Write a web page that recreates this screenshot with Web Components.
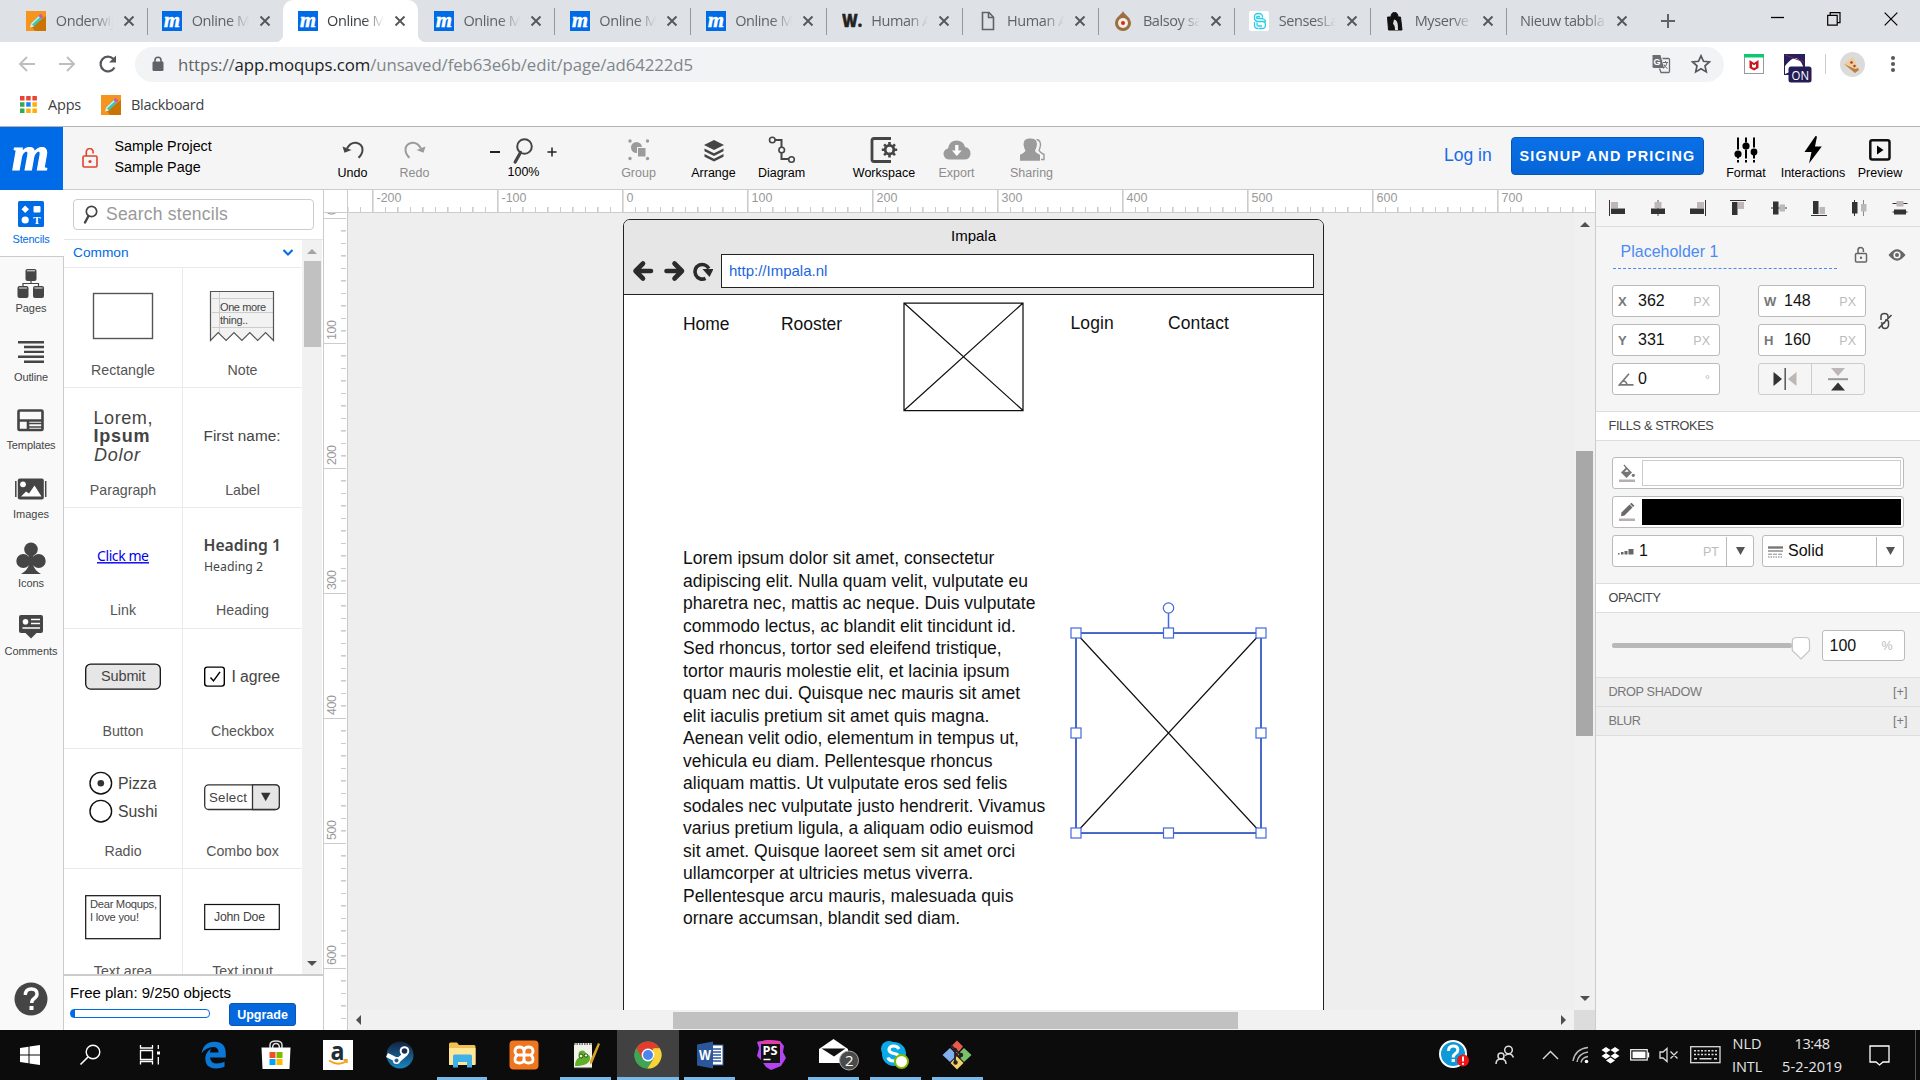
<!DOCTYPE html>
<html lang="en">
<head>
<meta charset="utf-8">
<title>Moqups editor</title>
<style>
html,body{margin:0;padding:0;width:1920px;height:1080px;overflow:hidden;background:#fff}
body{font-family:"Liberation Sans",Arial,sans-serif;color:#000}
</style>
</head>
<body>
<desktop-screen></desktop-screen>
<script>
const UI = '"Open Sans","Noto Sans",sans-serif';
const D = '#454545', G = '#9b9b9b', B = '#006be6';

function define(name, css, render) {
  customElements.define(name, class extends HTMLElement {
    connectedCallback() {
      if (this.shadowRoot) return;
      this.attachShadow({ mode: 'open' }).innerHTML =
        `<style>*{box-sizing:border-box}svg{display:block;flex:none}:host{box-sizing:border-box;display:block;flex:none}${css}</style>` +
        (typeof render === 'function' ? render(this) : render);
    }
  });
}
const A = (el, n, d = '') => el.getAttribute(n) ?? d;

/* name: [width, height, markup] */
const ICONS = {
  blackboard: [20, 20, `<rect width="20" height="20" fill="#f7941d"/><path d="M6 16 20 5V20H9z" fill="#c97403"/><path d="M4 16.500l1-4L13 4.500l3 3-8 8z" fill="#3cc6b4"/><path d="M5.500 13 13.500 5.500" stroke="#d7f3ef" stroke-width="1.300"/><path d="M12.500 5 14.500 2.700l3 3-2 2z" fill="#c95bb8"/><path d="M4 16.500l1-4 3 3z" fill="#f8e6c8"/>`],
  moq: [20, 20, `<rect width="20" height="20" fill="${B}"/><text x="2" y="15.500" font-family="Liberation Serif" font-style="italic" font-weight="bold" font-size="20" textLength="16" lengthAdjust="spacingAndGlyphs" fill="#fff" stroke="#fff" stroke-width=".5">m</text>`],
  wdot: [22, 20, `<text x="0" y="16" font-family="Open Sans" font-weight="800" font-size="17" textLength="20" lengthAdjust="spacingAndGlyphs" fill="#222" stroke="#222" stroke-width=".5">W.</text>`],
  doc: [20, 20, `<path d="M4.500 1.500h6.500l4.500 4.700v12.300h-11zM10.500 1.500v5h5" fill="none" stroke="#5f6368" stroke-width="1.600"/>`],
  drop: [20, 20, `<path d="M10 0C11 3.500 18 6 18 12.500a8 7.500 0 0 1-16 0C2 6 9 3.500 10 0z" fill="#9a7040"/><circle cx="10" cy="12" r="5" fill="#f6eee4"/><circle cx="10" cy="12" r="2" fill="#e0261c"/>`],
  senses: [20, 20, `<rect width="20" height="20" rx="2" fill="#fff"/><g fill="none" stroke="#29cfe6" stroke-width="1.300"><path d="M13.500 6.500V5.500q0-3-4-3t-4 3v2q0 2.500 3 3h5q3 0 3 3.500t-3.500 3.500h-3"/><path d="M11 5.500H9q-1.500 0-1.500 1t1.500 1h4.500q3 1 3 3.500M5.500 11v3.500q0 3 4 3M8 11.500v2.500q0 1 1.500 1H13"/></g>`],
  myserve: [20, 20, `<path d="M2.500 6h13l1.500 13H3.500zM6 6q0-4.500 3.500-4.500T13 6" fill="#111" stroke="#111"/><path d="M9 8.500q4.500 0 4 10.500h-3q0-5-2-6z" fill="#ddd"/>`],
  close: [12, 12, `<path d="M1.500 1.500l9 9M10.500 1.500l-9 9" stroke="#54585d" stroke-width="1.900"/>`],
  plus: [16, 16, `<path d="M8 1v14M1 8h14" stroke="#5f6368" stroke-width="2"/>`],
  min: [14, 14, `<path d="M0 5.500h13" stroke="#000" stroke-width="1.300"/>`],
  restore: [14, 14, `<path d="M.700 3.300h9.500v9.800H.700zM3.200 3V.700H13v10h-2.500" fill="none" stroke="#000" stroke-width="1.200"/>`],
  xwin: [14, 14, `<path d="M.700.700l12.600 12.600M13.300.700.700 13.300" stroke="#000" stroke-width="1.200"/>`],
  back: [18, 18, `<path d="M17 9H2M9 2 2 9l7 7" fill="none" stroke="#bcbec1" stroke-width="1.900"/>`],
  fwd: [18, 18, `<path d="M1 9h15M9 2l7 7-7 7" fill="none" stroke="#bcbec1" stroke-width="1.900"/>`],
  reload: [20, 20, `<path d="M16.500 13.500A7.400 7.400 0 1 1 15.300 4.800" fill="none" stroke="#54585d" stroke-width="2.200"/><path d="M18 1.500v7h-7z" fill="#54585d"/>`],
  plock: [12, 16, `<rect x=".5" y="5.500" width="11" height="9.500" rx="1.200" fill="#5f6368"/><path d="M3 6V4.200a3 3 0 0 1 6 0V6" fill="none" stroke="#5f6368" stroke-width="1.600"/>`],
  translate: [20, 20, `<path d="M1.500 1h8l3.500 13H3q-1.500 0-1.500-1.500z" fill="#6a6e73"/><path d="M11.500 4.500h6q1 0 1 1v12q0 1-1 1H10l-1.500-4" fill="none" stroke="#6a6e73" stroke-width="1.300"/><text x="2.500" y="11" font-size="9" font-weight="bold" fill="#fff" font-family="Liberation Sans">G</text><path d="M12 8.500h5M14.500 7v1.500M16 8.500q-.5 4-4 6M13 10.500q1 3 3.500 4" stroke="#6a6e73" fill="none"/>`],
  star: [20, 20, `<path d="M10 1.800l2.500 5.500 6 .6-4.500 4 1.300 6-5.300-3.100-5.300 3.100L6 11.900l-4.500-4 6-.6z" fill="none" stroke="#54585d" stroke-width="1.700"/>`],
  mcafee: [20, 20, `<rect x=".5" y=".5" width="19" height="19" fill="#fff" stroke="#999"/><rect width="20" height="3.500" fill="#0bc973"/><path d="M5.500 6v8l4.500 2.500 4.500-2.500V6L10 9z" fill="#c8181e"/><path d="M8 10l2 1.300 2-1.300v3l-2 1-2-1z" fill="#fff"/>`],
  onext: [28, 30, `<rect width="21" height="21" fill="#2a1f5c"/><path d="M1 20V12Q8 3 12 4t7 8v6H6z" fill="#fff"/><path d="M1 1 20 8" stroke="#6d2d63"/><rect x="4.500" y="12.500" width="23" height="16" rx="2.500" fill="#231c56"/><text x="7.500" y="25.500" font-size="12.500" fill="#fff" font-family="Open Sans" textLength="17.500" lengthAdjust="spacingAndGlyphs">ON</text>`],
  avatar: [25, 25, `<circle cx="12.500" cy="12.500" r="12.500" fill="#dcdbd9"/><path d="M4 12 13 5l6 13-4 2z" fill="#ecd09c"/><path d="M4 12l11 9 4-3-1-2-3 1z" fill="#b98043"/><circle cx="11.500" cy="10.500" r="1.300" fill="#a33"/><circle cx="14.500" cy="14" r="1.200" fill="#a33"/>`],
  dots: [6, 18, `<g fill="#54585d"><circle cx="3" cy="3" r="2"/><circle cx="3" cy="9" r="2"/><circle cx="3" cy="15" r="2"/></g>`],
  apps: [17, 17, `<g><path d="M0 0h4.500v4.500H0zM6.200 0h4.500v4.500H6.200zM12.400 0h4.500v4.500h-4.500z" fill="#ea4335"/><path d="M0 6.200h4.500v4.500H0zM0 12.400h4.500v4.500H0z" fill="#34a853"/><path d="M6.200 6.200h4.500v4.500H6.200z" fill="#1a84ee"/><path d="M12.400 6.200h4.500v4.500h-4.500zM6.200 12.400h4.500v4.500H6.200zM12.400 12.400h4.500v4.500h-4.500z" fill="#fbb005"/></g>`],

  biglogo: [63, 63, `<text x="12" y="43" font-family="Liberation Serif" font-style="italic" font-weight="bold" font-size="49" textLength="37" lengthAdjust="spacingAndGlyphs" fill="#fff" stroke="#fff" stroke-width="1.200">m</text>`],
  redlock: [16, 20, `<rect x="1" y="8" width="14" height="11" rx="1.200" fill="none" stroke="#e0442f" stroke-width="1.600"/><path d="M4.300 8V4.200a3.400 3.400 0 0 1 6.800-.500V5.500" fill="none" stroke="#e0442f" stroke-width="1.600"/><circle cx="8" cy="13.500" r="1.600" fill="#e0442f"/>`],
  undo: [22, 18, `<path d="M5 7.500Q8.500 1.200 14 1.800q6.500 1.200 6.500 7 0 4.500-4 8" fill="none" stroke="${D}" stroke-width="2"/><path d="M.500 5.500 2.500 11.800 9.500 9z" fill="${D}"/>`],
  redo: [22, 18, `<g transform="matrix(-1 0 0 1 22 0)"><path d="M5 7.500Q8.500 1.200 14 1.800q6.500 1.200 6.500 7 0 4.500-4 8" fill="none" stroke="${G}" stroke-width="2"/><path d="M.500 5.500 2.500 11.800 9.500 9z" fill="${G}"/></g>`],
  mag: [20, 26, `<circle cx="11.500" cy="8.500" r="7.300" fill="none" stroke="${D}" stroke-width="2"/><path d="M7.500 14.500 2.200 24" stroke="${D}" stroke-width="3.200" stroke-linecap="round"/>`],
  smag: [15, 19, `<circle cx="8.500" cy="6.500" r="5.200" fill="none" stroke="${D}" stroke-width="1.700"/><path d="M5.500 11 2 17.500" stroke="${D}" stroke-width="2.400" stroke-linecap="round"/>`],
  group: [22, 22, `<g fill="${G}"><circle cx="2" cy="2" r="1.700"/><circle cx="19.500" cy="2" r="1.700"/><circle cx="2" cy="19.500" r="1.700"/><circle cx="19.500" cy="19.500" r="1.700"/><circle cx="8.500" cy="8.500" r="5.500"/></g><rect x="9.500" y="8.500" width="8.500" height="9.500" fill="${G}" stroke="#f5f5f5"/>`],
  arrange: [22, 23, `<path d="M11 1 21 6 11 11 1 6z" fill="${D}"/><path d="M1.500 9.500 11 14.300l9.500-4.800v2.800L11 17l-9.500-4.700zM1.500 15 11 19.800 20.500 15v2.800L11 22.500l-9.500-4.700z" fill="${D}"/>`],
  diagram: [28, 28, `<path d="M7 4h6.500v7M13.500 17v6H20" fill="none" stroke="${D}" stroke-width="2"/><g fill="#f5f5f5" stroke="${D}" stroke-width="1.600"><circle cx="4.300" cy="4" r="2.800"/><circle cx="13.700" cy="14" r="2.800"/><circle cx="23.500" cy="23.500" r="2.800"/></g>`],
  workspace: [28, 26, `<path d="M21 1.500H4Q2 1.500 2 3.500v19q0 2 2 2h17" fill="none" stroke="${D}" stroke-width="2.800"/><circle cx="19.500" cy="12.700" r="4.300" fill="none" stroke="${D}" stroke-width="2.800"/><g stroke="${D}" stroke-width="2.600"><path d="M19.500 5v3M19.500 17.500v3M11.800 12.700h3M24.200 12.700h3M14.100 7.300l2 2M23 16.200l2 2M25 7.300l-2 2M16.100 16.200l-2 2"/></g>`],
  export: [28, 20, `<path d="M7 19.500Q1 19.500 .5 14 .5 9.500 5 8.500 6.500.500 13.500.500q7 0 8.500 6.500 5.500 1 5.500 6.500 0 6-6.500 6z" fill="${G}"/><path d="M12.200 5h3.200v5.500h3.300L13.800 16 9 10.500h3.200z" fill="#fff"/>`],
  sharing: [26, 24, `<path d="M17.500 1.500q4 .5 4 5.500-.5 3.500-1.500 5.500 1 2 5 4v5h-3" fill="none" stroke="${G}" stroke-width="1.400"/><path d="M12.500.500q5.500 0 5.500 6-.5 4-2 6 .5 2.500 5 4.200v6H1v-6q4.500-1.700 5.500-4.200Q5 10.500 4.500 6.500q0-6 5.500-6z" fill="${G}"/>`],
  format: [24, 26, `<g stroke="#000" stroke-width="2"><path d="M4 .5v12M12 .5v5M20 .5v10M4 19v2.500M12 12.500v9M20 17v4.500M4 23v2.500M12 23v2.500M20 23v2.500"/></g><circle cx="4" cy="17" r="3.600"/><circle cx="12" cy="9" r="3.600"/><circle cx="20" cy="15" r="3.400"/>`],
  bolt: [18, 28, `<path d="M11.500 0 .5 16h7L5 27.500 17.800 10.500H11L13 .5z" fill="#000"/>`],
  preview: [22, 22, `<rect x="1.300" y="1.300" width="19.200" height="19.200" rx="2" fill="none" stroke="#111" stroke-width="2.500"/><path d="M8 6.500 14.500 11 8 15.500z"/>`],

  stencils: [26, 26, `<rect width="26" height="26" rx="1.500" fill="${B}"/><path d="M7.200 4.500 11 8.300 7.200 12 3.500 8.300z" fill="#fff"/><rect x="15.500" y="5" width="7" height="6.500" rx="1" fill="#fff"/><circle cx="7.200" cy="19" r="3.600" fill="#fff"/><text x="15.300" y="22.700" font-size="11" font-weight="bold" fill="#fff" font-family="Liberation Serif">T</text>`],
  pages: [28, 30, `<g fill="${D}"><rect x="8.500" y="1" width="11" height="12" rx="2"/><rect x="0.500" y="18" width="11" height="12" rx="2"/><rect x="16" y="18" width="11" height="12" rx="2"/></g><path d="M14 13v2.500M6 18v-2.500h15.500V18" fill="none" stroke="${D}" stroke-width="1.200"/><path d="M10 2.800h8M2 20h8M17.500 20h8" stroke="#eee" stroke-width="1"/>`],
  outline: [26, 22, `<g fill="${D}"><path d="M0 0h26v2.400H0zM6 4.800h20v2.400H6zM6 9.700h20v2.400H6zM0 14.600h26V17H0zM6 19.500h20v2.500H6z"/></g>`],
  templates: [28, 23, `<rect x="1.500" y="1.500" width="24" height="19.500" rx="1" fill="none" stroke="${D}" stroke-width="2.600"/><path d="M1 11.500h25M11 12v9" stroke="${D}" stroke-width="2.600"/><path d="M12 14.500h13M12 18h13" stroke="${D}" stroke-width="1.500"/>`],
  images: [32, 22, `<rect x="2.800" y=".5" width="26" height="21" rx="2" fill="${D}"/><path d="M.800 3v16M30.700 3v16" stroke="${D}" stroke-width="1.500"/><circle cx="8" cy="6.300" r="2.900" fill="#fff"/><path d="M6 18.500 11 13.500l3 2L19.500 7.500 26.500 18.500z" fill="#fff"/>`],
  club: [30, 32, `<g fill="${D}"><circle cx="15" cy="7.300" r="6.800"/><circle cx="7.300" cy="19" r="7"/><circle cx="22.700" cy="19" r="7"/><path d="M12.500 12h5l-.5 10q1 6 8 10H5q7-4 8-10z"/></g>`],
  comments: [26, 25, `<path d="M3 1h20q2 0 2 2v14q0 2-2 2h-4.500L13 24.500 7.500 19H3q-2 0-2-2V3q0-2 2-2z" fill="${D}"/><circle cx="7.500" cy="7.700" r="2.800" fill="#fff"/><path d="M13 5.500h9M13 9.500h9M4.500 14h17.500" stroke="#fff" stroke-width="1.500"/>`],
  help: [34, 34, `<circle cx="17" cy="17" r="16.500" fill="${D}"/><path d="M11.300 13q0-6 6-6 5.700 0 5.700 5 0 2.500-2.800 4.500-2.500 1.700-2.500 4.500" fill="none" stroke="#fff" stroke-width="3.400"/><rect x="15.500" y="24" width="4" height="4" fill="#fff"/>`],
  chevd: [12, 7, `<path d="M1.500 1 6 5.500 10.500 1" fill="none" stroke="${B}" stroke-width="2"/>`],

  al0: [18, 18, `<path d="M.5 1v16" stroke="#333"/><rect x="2" y="3" width="7" height="6" fill="#bdb7b5"/><rect x="2" y="9.500" width="14" height="5.500" fill="#333"/>`],
  al1: [18, 18, `<path d="M9 1v16" stroke="#555"/><rect x="5.500" y="3" width="7" height="6" fill="#bdb7b5"/><rect x="2" y="9.500" width="14" height="5.500" fill="#333"/>`],
  al2: [18, 18, `<path d="M16.500 1v16" stroke="#333"/><rect x="8" y="3" width="7" height="6" fill="#bdb7b5"/><rect x="1" y="9.500" width="14" height="5.500" fill="#333"/>`],
  al3: [18, 18, `<path d="M1 1.500h16" stroke="#333"/><rect x="3" y="3" width="5.500" height="13" fill="#333"/><rect x="9" y="3" width="6" height="7" fill="#bdb7b5"/>`],
  al4: [18, 18, `<path d="M1 9h16" stroke="#333"/><rect x="3" y="2.500" width="5.500" height="13" fill="#333"/><rect x="9.500" y="5.500" width="5.500" height="7" fill="#bdb7b5"/>`],
  al5: [18, 18, `<path d="M1 16.500h16" stroke="#333"/><rect x="3" y="2" width="5.500" height="13" fill="#333"/><rect x="9.500" y="8" width="5.500" height="7" fill="#bdb7b5"/>`],
  al6: [18, 18, `<path d="M4.500 1v16" stroke="#333"/><path d="M13.500 1v16" stroke="#888"/><rect x="2" y="3" width="5.500" height="11.500" fill="#333"/><rect x="11" y="5" width="5.500" height="7.500" fill="#bdb7b5"/>`],
  al7: [18, 18, `<path d="M1.500 4.500h15M1.500 13h15" stroke="#333"/><rect x="5.500" y="2" width="7" height="5.500" fill="#bdb7b5"/><rect x="3" y="10.500" width="12" height="5" fill="#333"/>`],
  glock: [14, 18, `<rect x="1.500" y="7.500" width="11" height="8.500" rx="1" fill="none" stroke="#666" stroke-width="1.500"/><path d="M4 7V4.500a2.700 2.700 0 0 1 5.400-.500v2" fill="none" stroke="#666" stroke-width="1.500"/><circle cx="7" cy="11.700" r="1.200" fill="#666"/>`],
  eye: [18, 12, `<path d="M.500 6Q5 .3 9 .3T17.500 6Q13 11.700 9 11.700T.500 6z" fill="#666"/><circle cx="9" cy="6" r="3.600" fill="#f5f5f5"/><circle cx="9" cy="6" r="2" fill="#666"/>`],
  link: [16, 18, `<path d="M4 8V4.500q0-3 3.500-3t3.500 3V6M5 12v1.500q0 3 3 3t3.500-3V9.500Q11 8 8 8M4 10.500Q6 12 8 10.500" fill="none" stroke="${D}" stroke-width="1.500"/><path d="M14.500 3 1.500 16.500" stroke="${D}" stroke-width="1.500"/>`],
  angle: [16, 13, `<path d="M11 .8 1.500 11.800H15.500M5 8q3.500 0 4 4" fill="none" stroke="#777" stroke-width="1.700"/>`],
  fliph: [24, 22, `<path d="M.500 4 9 11 .5 18z" fill="#333"/><path d="M12.200 0v22" stroke="#555" stroke-width="1.500"/><path d="M23.500 4 15 11l8.500 7z" fill="#bdb7b5"/>`],
  flipv: [22, 24, `<path d="M4 1h14l-7 8z" fill="#bdb7b5"/><path d="M1 12.200h20" stroke="#999" stroke-width="2"/><path d="M4 23.500h14L11 15.500z" fill="#333"/>`],
  bucket: [17, 20, `<path d="M2 9.500 7.500 4l5.500 5.500L7.500 15z" fill="#777"/><path d="M5 2l3 3.500L4 9.300h7L8 5.500" fill="#fff" stroke="#777" stroke-width="1.200"/><circle cx="14.300" cy="12.300" r="1.600" fill="#777"/><rect x="0" y="16.500" width="16" height="2.500" fill="#b5b0ae"/>`],
  pencil: [17, 20, `<path d="M2.500 10.500 10.500 2.500l3 3-8 8-3.500.7z" fill="#6a6a6a"/><path d="M11 2 12.500.7l3 3L14 5z" fill="#6a6a6a"/><rect x="0" y="16.500" width="16" height="2.500" fill="#b5b0ae"/>`],
  weight: [16, 8, `<g fill="#666"><rect x="0" y="5" width="1.500" height="1.500"/><rect x="3" y="4" width="2.500" height="2.500"/><rect x="6.500" y="3" width="3" height="3.500"/><rect x="10.500" y="1" width="5" height="5.500"/></g>`],
  solid: [15, 12, `<path d="M0 1.500h15" stroke="#777" stroke-width="2.400"/><path d="M0 5h15" stroke="#aaa" stroke-width="2"/><path d="M0 8.200h15" stroke="#888" stroke-dasharray="4 1"/><path d="M0 11h15" stroke="#777" stroke-dasharray="1.500 1"/>`],
  thumb: [20, 25, `<path d="M5 1.500h9.500q4 0 4 4v9L10 23 1.300 14.500v-9q0-4 4-4z" fill="#fff" stroke="#c4c4c4" stroke-width="1.200"/>`],

  win: [20, 20, `<path d="M0 3 8.500 1.700V9.500H0zM9.500 1.500 20 0v9.500H9.500zM0 10.500h8.500v7.700L0 17zM9.500 10.500H20V20L9.500 18.400z" fill="#fff"/>`],
  tsearch: [22, 22, `<circle cx="14" cy="8" r="6.800" fill="none" stroke="#fff" stroke-width="1.400"/><path d="M9 13 1.500 20.500" stroke="#fff" stroke-width="1.600"/>`],
  tview: [22, 22, `<path d="M1.500 1v3h12V1M1.500 20.500v-3h12v3M1.500 6.500h12v9h-12zM19.300 1v4M19.300 13v7.500" fill="none" stroke="#fff" stroke-width="1.300"/><rect x="18" y="7.500" width="3" height="3" fill="#fff"/>`],
  edge: [26, 28, `<path d="M.5 12.500Q2.500.700 13.500.700 24.800.700 24.800 13v3.500H9q.5 6 7 6 4.500 0 7.500-1.800v5Q20 27.500 15 27.500 4 27 4.300 17q.3-6.500 6-9.300Q9 9.500 9 11.500h8.500q0-5.500-5-5.500Q5 6 .5 12.500z" fill="#0b78d7"/>`],
  store: [30, 30, `<path d="M9 8.500V5q0-4 6-4t6 4v3.500M11.500 8.500q0-5 3.500-5t3.500 5" fill="none" stroke="#ddd" stroke-width="1.500"/><path d="M.5 7.500h29L28.500 29h-27z" fill="#fff"/><path d="M8.500 12h6v6h-6z" fill="#f25022"/><path d="M15.500 12h6v6h-6z" fill="#7fba00"/><path d="M8.500 19h6v6h-6z" fill="#00a4ef"/><path d="M15.500 19h6v6h-6z" fill="#ffb900"/>`],
  amazon: [30, 30, `<rect width="30" height="30" fill="#fff"/><text x="7.500" y="20" font-family="Open Sans" font-size="25" font-weight="bold" textLength="14" lengthAdjust="spacingAndGlyphs" fill="#222d3a">a</text><path d="M6 20.500q9 6 17 1M20.500 20h3.300v3" fill="none" stroke="#f7a11a" stroke-width="1.800"/>`],
  steam: [28, 28, `<defs><linearGradient id="s" x2="0" y2="1"><stop offset="0" stop-color="#14213f"/><stop offset="1" stop-color="#1a86c0"/></linearGradient></defs><circle cx="14" cy="14" r="13.500" fill="url(#s)"/><path d="M1 14l11 5.500 8-7" stroke="#fff" stroke-width="4.500" fill="none"/><circle cx="18.500" cy="10" r="4.800" fill="#fff"/><circle cx="18.500" cy="10" r="2.800" fill="#1a2f55"/><circle cx="10.500" cy="19.500" r="3.600" fill="#fff"/><circle cx="10.500" cy="19.500" r="2" fill="#2a5f90"/>`],
  explorer: [28, 26, `<path d="M1 2q0-1.500 1.500-1.500H9L11 3h15q1.500 0 1.500 1.500V22H1z" fill="#f2c04e"/><path d="M1 6h26.500v17H1z" fill="#ffe79a"/><path d="M5 25.500V14q0-1.500 1.500-1.500h16Q24 12.500 24 14v11.500h-5V20h-9v5.500z" fill="#3fb1e8"/>`],
  xampp: [30, 30, `<rect x=".5" y=".5" width="29" height="29" rx="4" fill="#f0751f"/><path d="M15 11q-.5-4-4.500-4T6 10.500t3 4.500q-3 1-3 4.500t4.500 3.500 4.500-4V11q.5-4 4.500-4t4.500 3.500-3 4.500q3 1 3 4.500t-4.500 3.500-4.500-4M10 15h10" fill="none" stroke="#fff" stroke-width="2.800"/>`],
  npp: [28, 28, `<path d="M2 2h18v25H2z" fill="#f2f2e8"/><path d="M2 3h18" stroke="#777" stroke-width="2" stroke-dasharray="1.500 1"/><path d="M3 25q0-7 5-9-3-3 0-6 5-2 6 3 5 1 4 5-1 7-15 7z" fill="#5fae2a"/><circle cx="9" cy="15" r="2" fill="#e8f5d8" stroke="#264d10"/><circle cx="14" cy="14.500" r="1.700" fill="#e8f5d8" stroke="#264d10"/><path d="M18 20 26 2l2 1-7.500 18.500-2.500 2z" fill="#d8a52a"/><path d="M2 27h18" stroke="#333"/>`],
  chrome: [28, 28, `<circle cx="14" cy="14" r="13.500" fill="#4caf50"/><path d="M2.300 7.250A13.500 13.500 0 0 1 25.700 7.250H14z" fill="#e33b2e"/><path d="M25.700 7.250A13.500 13.500 0 0 1 13.500 27.500L20 17 18.500 7.250z" fill="#fdd13a"/><path d="M2.300 7.250 8.500 18 14 20l-.5 7.500A13.500 13.500 0 0 1 2.300 7.250z" fill="#3fa552"/><path d="M13 27.500 19.500 17.500 14 20z" fill="#3fa552"/><path d="M2.300 7.250H20L8.500 18z" fill="#e33b2e"/><path d="M2.300 7.250 8.500 18 14 20 10 27A13.500 13.500 0 0 1 2.300 7.250z" fill="#3fa552"/><circle cx="14" cy="14" r="6.400" fill="#fff"/><circle cx="14" cy="14" r="5" fill="#4a86ee"/>`],
  word: [28, 28, `<rect x="12" y="4" width="15" height="20" fill="#fff" stroke="#2b579a"/><path d="M16 8h9M16 11h9M16 14h9M16 17h9M16 20h9" stroke="#2b579a" stroke-width="1.300"/><path d="M1 3.500 17 .5v27L1 24.500z" fill="#2b579a"/><text x="3" y="19" font-size="14" font-family="Liberation Sans" font-weight="bold" fill="#fff" textLength="12" lengthAdjust="spacingAndGlyphs">W</text>`],
  ps: [30, 30, `<path d="M1 2 12 0l12 1 4 5-1 6 3 6-5 8-10 4-5-3-5-7-4-4 2-8z" fill="#b345f1"/><path d="M1 2 12 0l12 1 1 8z" fill="#e33ea5"/><path d="M5 4h19v19H5z" fill="#111"/><text x="6.500" y="15" font-size="12" font-weight="bold" font-family="Open Sans" fill="#fff" textLength="15" lengthAdjust="spacingAndGlyphs">PS</text><path d="M7.500 19.500h7" stroke="#fff" stroke-width="1.500"/>`],
  mail: [52, 34, `<g transform="translate(11)"><path d="M1 11 15.500 1 30 11v14H1z" fill="#fff"/><path d="M3.500 10.500h24L16 18.500z" fill="#111"/><circle cx="31" cy="22.500" r="9.500" fill="#4a4a4a" stroke="#aaa"/><text x="27" y="28" font-size="15" font-family="Open Sans" fill="#fff">2</text></g>`],
  skype: [30, 30, `<circle cx="9" cy="9" r="8" fill="#0aa9ea"/><circle cx="14" cy="14" r="12" fill="#0aa9ea"/><path d="M19 9q-1.500-3-5.500-3T9 9.500q0 3 5 4t5 4q0 3.500-5 3.500t-6-3.500" fill="none" stroke="#fff" stroke-width="3.200"/><circle cx="21.500" cy="21.500" r="6.500" fill="#fff" stroke="#7fb900" stroke-width="2"/>`],
  git: [30, 30, `<g><path d="M15 .5 21 6.500 15 14 9 6.500z" fill="#ea5a4a"/><path d="M.5 15 8 8l7 7-7 7z" fill="#83aef0"/><path d="M22 8l7.500 7L22 22l-7-7z" fill="#79c06b"/><path d="M15 16l6.500 7-6.500 6.500L8.500 23z" fill="#f3d06c"/></g><path d="M9 5l4 4.500v14M13 13l5.500 5.500M13 9.500l5 4" stroke="#222" stroke-width="1.800" fill="none"/><circle cx="13" cy="10" r="2.200" fill="#222"/><circle cx="19" cy="15" r="2.200" fill="#222"/><circle cx="13.500" cy="22.500" r="2.200" fill="#222"/>`],
  thelp: [32, 30, `<circle cx="14" cy="14" r="13" fill="#0e9ad8" stroke="#fff" stroke-width="2"/><path d="M9.500 11q0-5 4.700-5t4.600 4q0 2-2.300 3.500T14.200 17.500" fill="none" stroke="#fff" stroke-width="3"/><rect x="12.600" y="19" width="3.300" height="3" fill="#fff"/><circle cx="24" cy="20.500" r="6" fill="#f01414"/><path d="M24 16.500v5M24 23v1.800" stroke="#fff" stroke-width="1.900"/>`],
  people: [20, 20, `<g fill="none" stroke="#ddd" stroke-width="1.500"><circle cx="13.500" cy="5" r="3.800"/><circle cx="6" cy="11" r="3"/><path d="M1 19q0-5 5-5t5 5M10 10.500q6-4 8.500 2"/></g>`],
  up: [17, 10, `<path d="M1 9 8.500 1.500 16 9" fill="none" stroke="#ddd" stroke-width="1.400"/>`],
  wifi: [18, 18, `<g fill="none" stroke="#bbb" stroke-width="1.400"><path d="M1 15Q3 3 16 1.500M5 16Q6.500 7.500 16 6M9 16.500Q10 11.500 16 10.500"/></g><circle cx="14.500" cy="15.500" r="1.800" fill="#fff"/>`],
  dropbox: [19, 17, `<path d="M5 0l4.500 3L5 6 .5 3zM14 0l4.500 3L14 6 9.500 3zM5 6l4.500 3L5 12 .5 9zM14 6l4.500 3L14 12 9.500 9zM9.500 10.500l4.500 3-4.500 3-4.500-3z" fill="#fff"/>`],
  battery: [20, 12, `<rect x=".7" y=".7" width="16.500" height="10.300" fill="none" stroke="#fff" stroke-width="1.200"/><rect x="2.500" y="2.500" width="13" height="6.700" fill="#fff"/><path d="M18.500 3.500v5" stroke="#fff" stroke-width="1.400"/>`],
  mute: [20, 16, `<path d="M1 5h3L8 1.500v13L4 11H1zM11.500 4.500l7 7M18.500 4.500l-7 7" fill="none" stroke="#ddd" stroke-width="1.300"/>`],
  keyboard: [31, 18, `<rect x=".7" y=".7" width="29.300" height="16" fill="none" stroke="#ddd" stroke-width="1.300"/><path d="M4 4.700h23M4 8.500h23" stroke="#ddd" stroke-width="1.400" stroke-dasharray="2 1.500"/><path d="M4 12.700h3M9.500 12.700h12M24 12.700h3" stroke="#ddd" stroke-width="1.400"/>`],
  notif: [22, 21, `<path d="M1 1h19v16h-6l-3.500 3-3.500-3H1z" fill="none" stroke="#fff" stroke-width="1.300"/>`]
};

define('ui-icon', '', el => { const [w, h, m] = ICONS[A(el, 'name')]; return `<svg width="${w}" height="${h}" viewBox="0 0 ${w} ${h}">${m}</svg>`; });

/* ---------- browser chrome ---------- */
define('browser-tab', `
:host{width:135.900px;height:42px;position:relative;display:flex;align-items:center;padding-left:14.500px;font:14.500px ${UI};color:#5f6368;border-left:1px solid transparent}
:host([line]){border-image:linear-gradient(transparent 9px,#94979b 9px,#94979b 34px,transparent 34px) 1}
:host([active]){background:#fff;border-radius:10px 10px 0 0;color:#3c4043;border:0;padding-left:15px}
:host([active])::before,:host([active])::after{content:"";position:absolute;bottom:0;width:8px;height:8px}
:host([active])::before{left:-8px;background:radial-gradient(circle at 0 0,#dee1e6 8px,#fff 8.500px)}
:host([active])::after{right:-8px;background:radial-gradient(circle at 100% 0,#dee1e6 8px,#fff 8.500px)}
ui-icon{width:20px}
.t{margin-left:9.500px;width:57px;overflow:hidden;white-space:nowrap;letter-spacing:-.420px;-webkit-mask-image:linear-gradient(90deg,#000 65%,transparent);line-height:24px}
.t.w{margin-left:-1px;width:87px;-webkit-mask-image:linear-gradient(90deg,#000 75%,transparent)}
.x{width:12px;margin-left:10px}.w+.x{margin-left:9px}`,
el => `${A(el, 'icon') ? `<ui-icon name="${A(el, 'icon')}"></ui-icon>` : ''}<span class="t ${A(el, 'icon') ? '' : 'w'}"><slot></slot></span><ui-icon class="x" name="close"></ui-icon>`);

define('tab-strip', `:host{height:42px;background:#dee1e6;display:flex;padding-left:10.800px;align-items:center}
.p{margin-left:19px}.m{margin-left:95px}.r{margin-left:42px}.c{margin-left:43px}.m,.r,.c{margin-top:-5px}`,
`<browser-tab icon="blackboard">Onderwij</browser-tab><browser-tab line icon="moq">Online M</browser-tab><browser-tab active icon="moq">Online M</browser-tab><browser-tab icon="moq">Online M</browser-tab><browser-tab line icon="moq">Online M</browser-tab><browser-tab line icon="moq">Online M</browser-tab><browser-tab line icon="wdot">Human A</browser-tab><browser-tab line icon="doc">Human A</browser-tab><browser-tab line icon="drop">Balsoy sa</browser-tab><browser-tab line icon="senses">SensesLa</browser-tab><browser-tab line icon="myserve">Myserve</browser-tab><browser-tab line>Nieuw tabbla</browser-tab>
<ui-icon class="p" name="plus"></ui-icon><ui-icon class="m" name="min"></ui-icon><ui-icon class="r" name="restore"></ui-icon><ui-icon class="c" name="xwin"></ui-icon>`);

define('address-bar', `:host{height:46px;display:flex;align-items:center;padding:0 0 2px 18px;background:#fff}
.pill{margin-left:17px;width:1589px;height:35px;border-radius:18px;background:#f1f3f4;display:flex;align-items:center;padding-left:17px;font:16.800px ${UI};color:#80868b}
.pill b{font-weight:400;color:#202124}.pill i{font-style:normal;color:#5f6368}
fit-text{margin-left:14px}
.sep{width:1px;height:20px;background:#ccc;margin-left:13px}`,
`<ui-icon name="back"></ui-icon><ui-icon name="fwd" style="margin-left:22px"></ui-icon><ui-icon name="reload" style="margin-left:22px"></ui-icon>
<div class="pill"><ui-icon name="plock"></ui-icon><fit-text w="515"><i>https://</i><b>app.moqups.com</b>/unsaved/feb63e6b/edit/page/ad64222d5</fit-text>
<ui-icon name="translate" style="margin-left:958px"></ui-icon><ui-icon name="star" style="margin-left:20px"></ui-icon></div>
<ui-icon name="mcafee" style="margin-left:20px"></ui-icon><ui-icon name="onext" style="margin:9px 0 0 20px"></ui-icon><div class="sep"></div><ui-icon name="avatar" style="margin-left:14px"></ui-icon><ui-icon name="dots" style="margin-left:25px"></ui-icon>`);

define('bookmark-bar', `:host{height:39px;display:flex;align-items:center;padding:0 0 5px 20px;border-bottom:1px solid #b3b3b3;font:14.500px ${UI};color:#3c4043;background:#fff}`,
`<ui-icon name="apps"></ui-icon><fit-text w="33" style="margin-left:11px">Apps</fit-text><ui-icon name="blackboard" style="margin-left:20px"></ui-icon><fit-text w="73" style="margin-left:10px">Blackboard</fit-text>`);

/* ---------- application header ---------- */
define('tool-button', `:host{width:var(--w,60px);height:62px;display:flex;flex-direction:column;align-items:center;font-size:12.500px;color:#000;white-space:nowrap}
:host([off]){color:#8c8c8c}
.i{height:30px;margin-top:8px;display:flex;align-items:center}.l{line-height:16px;height:16px}`,
el => `<div class="i"><ui-icon name="${A(el, 'icon')}"></ui-icon></div><div class="l"><slot></slot></div>`);

define('zoom-control', `:host{width:78px;height:62px;margin-left:40px;font-size:12.500px}
.r{display:flex;align-items:center;height:30px;margin-top:10px;padding-left:5px}
.h{background:#222;width:10px;height:1.500px}
.c{text-align:center;line-height:14px;margin-top:-2px}`,
`<div class="r"><div class="h"></div><ui-icon name="mag" style="margin:0 14px 2px 13px"></ui-icon><svg width="10" height="10"><path d="M5 .5v9M.5 5h9" stroke="#222" stroke-width="1.500"/></svg></div><div class="c">100%</div>`);

define('app-header', `:host{height:63px;background:#f5f5f5;border-bottom:1px solid #ccc;display:flex}
.logo{width:63px;height:63px;background:${B};flex:none}
.name{margin-left:16.500px;width:208px;font-size:14.350px;line-height:21px;padding-top:9px}
.login{margin-left:382.500px;width:67px;font-size:17.500px;color:#1a6be6;line-height:56px}
.btn{width:193px;height:38px;margin:10px 12px 0 0;border:1px solid #0a56b4;border-radius:4px;background:linear-gradient(#0a70e8,#0565d6);color:#fff;font-weight:bold;font-size:14.400px;display:flex;align-items:center;justify-content:center;flex:none;padding-bottom:1px}`,
`<div class="logo"><ui-icon name="biglogo"></ui-icon></div><ui-icon name="redlock" style="margin:21px 0 0 19px"></ui-icon>
<div class="name"><div>Sample Project</div><div>Sample Page</div></div>
<tool-button icon="undo">Undo</tool-button><tool-button off icon="redo" style="margin-left:2px">Redo</tool-button><zoom-control></zoom-control>
<tool-button off icon="group" style="margin-left:46px">Group</tool-button><tool-button icon="arrange" style="margin-left:15px">Arrange</tool-button><tool-button icon="diagram" style="margin-left:8px">Diagram</tool-button>
<tool-button icon="workspace" style="margin-left:32.500px;--w:80px">Workspace</tool-button><tool-button off icon="export" style="margin-left:2.500px">Export</tool-button><tool-button off icon="sharing" style="margin-left:15px">Sharing</tool-button>
<div class="login">Log in</div><div class="btn"><fit-text w="176">SIGNUP AND PRICING</fit-text></div>
<tool-button icon="format">Format</tool-button><tool-button icon="bolt" style="margin-left:2px;--w:70px">Interactions</tool-button><tool-button icon="preview" style="margin-left:2px">Preview</tool-button>`);

/* ---------- left rail ---------- */
define('rail-item', `:host{height:68.700px;width:62px;padding-top:9px;font-size:11px;color:#444;text-align:center}
:host([on]){height:67px;padding-top:6.500px;background:#fff;border-bottom:1px solid #ccc;color:${B};width:64px}
.i{height:34px;display:flex;align-items:center;justify-content:center}.l{line-height:17px;display:flex;justify-content:center}
:host([on]) .i,:host([on]) .l{width:62px}`,
el => `<div class="i"><ui-icon name="${A(el, 'icon')}"></ui-icon></div><div class="l"><fit-text w="${A(el, 'w')}">${A(el, 'label')}</fit-text></div>`);
define('side-rail', `:host{width:64px;background:#f9f9f9;display:flex;flex-direction:column;box-shadow:inset -1px 0 #ccc}
.h{margin:auto 0 14px 14px}`,
`<rail-item on icon="stencils" label="Stencils" w="37"></rail-item><rail-item icon="pages" label="Pages" w="31"></rail-item><rail-item icon="outline" label="Outline" w="34"></rail-item><rail-item icon="templates" label="Templates" w="49"></rail-item><rail-item icon="images" label="Images" w="36"></rail-item><rail-item icon="club" label="Icons" w="26"></rail-item><rail-item icon="comments" label="Comments" w="53"></rail-item><ui-icon class="h" name="help"></ui-icon>`);

/* ---------- stencil panel ---------- */
const T = (x, y, w, s, t, extra = '') => `<text x="${x}" y="${y}" font-size="${s}" textLength="${w}" ${extra}>${t}</text>`;
const NS = 'font-family="Noto Sans"';
const STENCILS = [
  ['Rectangle', `<rect x="93.500" y="293.500" width="59" height="45" fill="#fff" stroke="#555" stroke-width="1.400"/>`],
  ['Note', `<path d="M210.500 340.500V291.500h63v49l-8-8-8 8-8-8-8 8-8-8-7.500 8-7.500-8-7.500 8-8-8z" fill="#f2f2f2" stroke="none"/><path d="M212 298.500h61M212 312.500h61M212 327.500h61M219.500 292v41" stroke="#ccc"/><path d="M210.500 340.500V291.500h63v49l-7.900-8-7.900 8-7.900-8-7.900 8-7.900-8-7.900 8-7.900-8z" fill="none" stroke="#555" stroke-width="1.200"/>` + T(220, 310.500, 46, 11, 'One more') + T(220, 323.500, 28, 11, 'thing..')],
  ['Paragraph', T(93.500, 424, 59, 18.100, 'Lorem,') + T(93.500, 442.500, 56, 18, 'Ipsum', 'font-weight="bold"') + T(94, 461, 46, 18, 'Dolor', 'font-style="italic"')],
  ['Label', T(203.500, 441.500, 77, 15.300, 'First name:')],
  ['Link', T(97, 561.500, 52, 14, 'Click me', NS + ' style="fill:#00e;text-decoration:underline"')],
  ['Heading', T(203.500, 551.500, 77.500, 16, 'Heading 1', NS + ' font-weight="600" lengthAdjust="spacingAndGlyphs"') + T(204, 571, 59, 12.700, 'Heading 2', NS + ' lengthAdjust="spacingAndGlyphs"')],
  ['Button', `<rect x="85.700" y="663.700" width="74.600" height="25" rx="5" fill="#e6e6e6" stroke="#111" stroke-width="1.300"/>` + T(101, 681, 44.500, 14.500, 'Submit')],
  ['Checkbox', `<rect x="204.700" y="666.700" width="19.600" height="19" rx="2.500" fill="#fff" stroke="#000" stroke-width="1.400"/><path d="M210.500 677l3 3.500 6.500-9" fill="none" stroke="#000" stroke-width="1.500"/>` + T(231.500, 682, 48.500, 15.800, 'I agree')],
  ['Radio', `<circle cx="100.800" cy="783" r="10.800" fill="#fff" stroke="#111" stroke-width="1.400"/><circle cx="100.800" cy="811" r="10.800" fill="#fff" stroke="#111" stroke-width="1.400"/><circle cx="100.800" cy="783" r="3.300" fill="#333"/>` + T(118, 789, 38.500, 15.800, 'Pizza') + T(118, 817, 39.500, 15.800, 'Sushi')],
  ['Combo box', `<rect x="204.700" y="784.700" width="74.600" height="24.600" rx="4" fill="#fff" stroke="#333" stroke-width="1.300"/><path d="M252.500 784.700h22.800q4 0 4 4v16.600q0 4-4 4h-22.800z" fill="#e6e6e6" stroke="#333" stroke-width="1.300"/><path d="M261 792.500h9.500l-4.800 8.500z" fill="#333"/>` + T(209, 801.500, 38, 13.300, 'Select')],
  ['Text area', `<rect x="85.700" y="895.700" width="74.600" height="43" fill="#fff" stroke="#111" stroke-width="1.200"/>` + T(90, 908, 67, 11.200, 'Dear Moqups,') + T(90, 921, 49, 11.200, 'I love you!')],
  ['Text input', `<rect x="204.700" y="904.500" width="74.600" height="25" fill="#fff" stroke="#111" stroke-width="1.200"/>` + T(214, 921, 51, 12.300, 'John Doe')]
];
define('stencil-card', `:host{height:120.200px;padding-top:2px;border-bottom:1px solid #eaeaea;font-size:14.200px;color:#555}
:host([left]){border-right:1px solid #eaeaea}
svg{height:92px;width:118px;font-family:"Liberation Sans"}text{fill:#444}.l{line-height:17px;text-align:center}`,
el => { const n = +A(el, 'n'); return `<svg viewBox="${n % 2 ? 183 : 64} ${270 + 120.2 * (n >> 1)} 118 92">${STENCILS[n][1]}</svg><div class="l">${STENCILS[n][0]}</div>`; });

define('scroll-bar', `:host{display:flex;flex-direction:column;align-items:center;background:#f1f1f1}
.u{margin-top:var(--u,9px)}.t{width:17px;margin-top:var(--t,7px);height:var(--h,86px);background:var(--c,#c1c1c1)}.d{margin-top:auto;margin-bottom:var(--d,8px)}`,
`<svg class="u" width="10" height="5"><path d="M5 0 10 5H0z" fill="var(--a,#a3a3a3)"/></svg><div class="t"></div><svg class="d" width="10" height="5"><path d="M5 5 10 0H0z" fill="#505050"/></svg>`);

define('stencil-panel', `:host{width:259px;display:flex;flex-direction:column;background:#fff}
.s{height:50px;border-bottom:1px solid #e6e6e6;padding:9px 0 0 9px}
.box{width:241px;height:31px;border:1px solid #ccc;border-radius:4px;display:flex;align-items:center;padding-left:9px;font-size:17.500px;color:#999}
.m{height:734px;display:flex;overflow:hidden}
.list{width:238px;overflow:hidden}
.c{height:28px;border-bottom:1px solid #eaeaea;display:flex;align-items:center;justify-content:space-between;padding:0 8px 2px 9px;font-size:13.700px;color:${B}}
.g{display:grid;grid-template-columns:119px 119px}
scroll-bar{width:20px}
.f{height:56px;border-top:2px solid #ccc;padding:7px 0 0 6px;font-size:15px;line-height:20px}
.r{display:flex;align-items:flex-start}.p{width:140px;height:9px;margin-top:6px;border:1px solid ${B};border-radius:4px;background:linear-gradient(90deg,${B} 4px,#fff 4px)}
.b{width:67px;height:23px;margin-left:19px;border:1px solid #0a56b4;border-radius:3px;background:#0569dd;color:#fff;font-weight:bold;font-size:12.500px;text-align:center;line-height:22px}`,
`<div class="s"><div class="box"><ui-icon name="smag"></ui-icon><fit-text w="122" style="margin-left:8px">Search stencils</fit-text></div></div>
<div class="m"><div class="list"><div class="c"><span>Common</span><ui-icon name="chevd"></ui-icon></div><div class="g">${STENCILS.map((s, i) => `<stencil-card n="${i}" ${i % 2 ? '' : 'left'}></stencil-card>`).join('')}</div></div><scroll-bar></scroll-bar></div>
<div class="f"><fit-text w="161">Free plan: 9/250 objects</fit-text><div class="r"><div class="p"></div><div class="b">Upgrade</div></div></div>`);

/* ---------- canvas ---------- */
function hRuler() {
  let s = '';
  for (let k = -22; k < 78; k++) {
    const x = 622.5 + 12.5 * k;
    if (k % 10 === 0) s += `<rect x="${Math.floor(x)}" y="190" width="1.600" height="22" fill="#ccc"/><text x="${x + 4}" y="201.500">${k * 10}</text>`;
    else s += `<rect x="${Math.floor(x)}" y="207" width="${k % 2 ? 1 : 1.6}" height="5" fill="#ccc"/>`;
  }
  return s;
}
function vRuler() {
  let s = '';
  for (let k = 0; k < 65; k++) {
    const y = 218 + 12.5 * k, f = Math.floor(y);
    if (k % 10 === 0) s += `<rect x="324" y="${f}" width="22" height="1" fill="#ccc"/><text transform="translate(335.500 ${f - 3}) rotate(-90)" textLength="${k ? 20 : 7}">${k * 10}</text>`;
    else s += `<rect x="341" y="${f}" width="5" height="${k % 2 ? 1.6 : 1}" fill="#ccc"/>`;
  }
  return s;
}
define('ruler-strip', `svg{font:12.500px "Liberation Sans";fill:#999;background:#fff}`,
el => A(el, 'dir') === 'h' ? `<svg width="1247" height="22" viewBox="348 190 1247 22">${hRuler()}</svg>` : `<svg width="23" height="817" viewBox="324 213 23 817">${vRuler()}</svg>`);

define('canvas-text', `:host{position:absolute;font-size:17.500px;line-height:22.500px;color:#111;white-space:nowrap}`, '<slot></slot>');

define('place-holder', `:host{position:absolute}svg{overflow:visible}`, el => {
  const w = +A(el, 'w'), h = +A(el, 'h');
  let s = `<path d="M0 0H${w}V${h}H0zM0 0 ${w} ${h}M${w} 0 0 ${h}" fill="#fff" stroke="#111" stroke-width="1.250"/>`;
  if (el.hasAttribute('selected')) {
    s += `<g fill="#fff" stroke="#4169e1"><rect width="${w}" height="${h}" fill="none" stroke-width="1.600"/><path d="M${w / 2} 0v-20" stroke-width="1.500"/><circle cx="${w / 2}" cy="-25" r="5.200" stroke-width="1.200"/>`;
    for (const x of [0, w / 2, w]) for (const y of [0, h / 2, h]) if (x !== w / 2 || y !== h / 2) s += `<rect x="${x - 5}" y="${y - 5}" width="10" height="10" stroke-width="1.200"/>`;
    s += '</g>';
  }
  return `<svg width="${w}" height="${h}">${s}</svg>`;
});

define('mock-browser', `:host{position:absolute;width:701px;height:860px;border:1.500px solid #222;border-radius:7px 7px 0 0;background:#fff;overflow:hidden}
.h{height:75px;background:#e6e6e6;border-bottom:1px solid #222}
.t{text-align:center;font-size:15px;line-height:20px;padding-top:6px;height:34px}
.r{display:flex;align-items:center;padding-left:8px}
.u{width:593px;height:34px;border:1.500px solid #222;background:#fff;margin-left:8px;padding:0 7px;font-size:15px;line-height:31px;color:#1a66e0}`,
`<div class="h"><div class="t">Impala</div><div class="r"><svg width="81" height="22"><g fill="none" stroke="#2b2b2b" stroke-width="4.600" stroke-linecap="round" stroke-linejoin="round"><path d="M11 3.500 3.500 11 11 18.500M4 11h15M42.500 3.500 50 11l-7.500 7.500M49.500 11H34.500"/><path d="M73.500 18.300a7.300 7.300 0 1 1 3.300-9.800" stroke-width="3.600" stroke-linecap="butt"/></g><path d="M70.500 9h11l-4 8z" fill="#2b2b2b"/></svg><div class="u">http://Impala.nl</div></div></div>`);

const LINES = [['Lorem ipsum dolor sit amet, consectetur', 812], ['adipiscing elit. Nulla quam velit, vulputate eu', 839.500], ['pharetra nec, mattis ac neque. Duis vulputate', 845.500], ['commodo lectus, ac blandit elit tincidunt id.', 829.500], ['Sed rhoncus, tortor sed eleifend tristique,', 818], ['tortor mauris molestie elit, et lacinia ipsum', 824.500], ['quam nec dui. Quisque nec mauris sit amet', 833], ['elit iaculis pretium sit amet quis magna.', 808], ['Aenean velit odio, elementum in tempus ut,', 832], ['vehicula eu diam. Pellentesque rhoncus', 810.500], ['aliquam mattis. Ut vulputate eros sed felis', 822.500], ['sodales nec vulputate justo hendrerit. Vivamus', 853.500], ['varius pretium ligula, a aliquam odio euismod', 844], ['sit amet. Quisque laoreet sem sit amet orci', 829], ['ullamcorper at ultricies metus viverra.', 794.500], ['Pellentesque arcu mauris, malesuada quis', 827.500], ['ornare accumsan, blandit sed diam.', 784]];

define('design-stage', `:host{position:relative;overflow:hidden;background:#eee}`,
`<mock-browser style="left:275px;top:6px"></mock-browser>
<canvas-text style="left:335px;top:100px"><fit-text w="46.500">Home</fit-text></canvas-text><canvas-text style="left:433px;top:100px"><fit-text w="61">Rooster</fit-text></canvas-text>
<place-holder w="119" h="107.500" style="left:555.500px;top:90px"></place-holder>
<canvas-text style="left:722.500px;top:99px"><fit-text w="43.500">Login</fit-text></canvas-text><canvas-text style="left:820px;top:99px"><fit-text w="61">Contact</fit-text></canvas-text>
<canvas-text style="left:335px;top:334px">${LINES.map(([t, e]) => `<div><fit-text w="${((e - 557.7) * 1.2245).toFixed(1)}">${t}</fit-text></div>`).join('')}</canvas-text>
<place-holder selected w="185" h="200" style="left:728.200px;top:420.300px"></place-holder>`);

define('canvas-area', `:host{width:1272px;display:grid;grid-template-columns:25px 1226px 21px;grid-template-rows:23px 797px 20px;background:#f0f0f0;box-sizing:border-box}
.c{background:#fff;border-left:1px solid #ccc;border-right:1px solid #ccc;border-bottom:1px solid #ccc}
.h{grid-column:2/4;border-bottom:1px solid #ccc;overflow:hidden}
.v{grid-row:2/4;grid-column:1;border-left:1px solid #ccc;border-right:1px solid #ccc;overflow:hidden}
scroll-bar{--u:9px;--t:224px;--h:285px;--c:#a8a8a8;--a:#505050;--d:9px;background:#f0f0f0}
.s{display:flex;align-items:center;padding:0 8px;background:#f1f1f1}.s div{width:565px;height:17px;background:#c1c1c1;margin-left:312px}.s svg:last-child{margin-left:auto}
.k{background:#dcdcdc}`,
`<div class="c"></div><div class="h"><ruler-strip dir="h"></ruler-strip></div><div class="v"><ruler-strip dir="v"></ruler-strip></div><design-stage></design-stage><scroll-bar></scroll-bar>
<div class="s"><svg width="5" height="10"><path d="M5 0v10L0 5z" fill="#505050"/></svg><div></div><svg width="5" height="10"><path d="M0 0v10l5-5z" fill="#505050"/></svg></div><div class="k"></div>`);

/* ---------- inspector ---------- */
define('num-field', `:host{width:var(--w,108px);height:31.500px;border:1px solid #bbb;border-radius:3px;background:#fff;display:flex;align-items:center;font-size:16px;color:#111;padding-left:var(--pl,5px)}
.n0{padding-top:1px}
.k{width:var(--k,20px);font-weight:bold;font-size:13px;color:#777;padding-top:2px;flex:none;line-height:15px}.u{margin-left:auto;padding-right:var(--pr,9px);font-size:12.500px;color:#bbb;padding-top:2px}
.a{width:27px;align-self:stretch;border-left:1px solid #bbb;display:flex;align-items:center;justify-content:center;margin:1px 0 0}.a.n{margin-left:auto}`,
el => `<span class="k">${A(el, 'key')}<slot name="icon"></slot></span><span class="n0">${A(el, 'value')}</span>${A(el, 'unit') ? `<span class="u">${A(el, 'unit')}</span>` : ''}${el.hasAttribute('arrow') ? `<span class="a ${A(el, 'unit') ? '' : 'n'}"><svg width="9" height="8"><path d="M0 0h9L4.500 8z" fill="#555"/></svg></span>` : ''}`);
define('color-field', `:host{width:292px;height:31.500px;border:1px solid #bbb;border-radius:3px;background:#fff;display:flex;align-items:center;padding-left:6px}
.s{margin-left:6px;width:259px;height:26px;background:var(--f);border:var(--b,0)}`,
el => `<ui-icon name="${A(el, 'icon')}"></ui-icon><div class="s"></div>`);
define('section-title', `:host{height:30px;border-top:1px solid #ddd;border-bottom:1px solid #ddd;background:#fff;font-size:12.700px;color:#444;padding:0 12.500px;line-height:28px;display:flex;justify-content:space-between}
:host([shut]){background:#eee;color:#777;height:29px;border-bottom:0}`,
el => `<fit-text w="${A(el, 'w')}">${A(el, 'label')}</fit-text>${el.hasAttribute('shut') ? '<span>[+]</span>' : ''}`);

define('inspector-panel', `:host{width:325px;border-left:1px solid #ccc;background:#f5f5f5}
.al{height:37px;border-bottom:1px solid #ddd;display:flex;padding:9px 0 0 12.500px;gap:22.300px}
.n{display:flex;height:58px}.n .t{width:224px;height:42px;margin-left:17px;padding:15px 0 0 7.500px;font-size:15.900px;line-height:19px;color:#4a8af4;border-bottom:1px dashed #4a8af4}
.g{display:grid;grid-template-columns:146px 108px;grid-auto-rows:39px;margin-left:16px}
.w{display:flex;height:126px}
.flip{width:107px;height:31.500px;border:1px solid #ccc;border-radius:3px;display:flex}.flip div{flex:1;display:flex;align-items:center;justify-content:center}.flip div+div{border-left:1px solid #ccc}
.fs{height:142px;padding:16px 0 0 16px;display:flex;flex-direction:column;gap:7.500px}.row{display:flex;gap:8px}
.op{height:64px;display:flex;padding:16.500px 0 0 16px}.bar{width:180px;height:5px;border-radius:2px;background:#b8b8b8;margin-top:13px}
.end{border-top:1px solid #ddd}`,
`<div class="al">${[0, 1, 2, 3, 4, 5, 6, 7].map(i => `<ui-icon name="al${i}"></ui-icon>`).join('')}</div>
<div class="n"><div class="t"><fit-text w="98">Placeholder 1</fit-text></div><ui-icon name="glock" style="margin:19px 0 0 17px"></ui-icon><ui-icon name="eye" style="margin:22px 0 0 20px"></ui-icon></div>
<div class="w"><div class="g"><num-field key="X" value="362" unit="PX"></num-field><num-field key="W" value="148" unit="PX"></num-field><num-field key="Y" value="331" unit="PX"></num-field><num-field key="H" value="160" unit="PX"></num-field><num-field value="0" unit="°"><ui-icon slot="icon" name="angle"></ui-icon></num-field><div class="flip"><div><ui-icon name="fliph"></ui-icon></div><div><ui-icon name="flipv"></ui-icon></div></div></div><ui-icon name="link" style="margin:27px 0 0 11px"></ui-icon></div>
<section-title label="FILLS &amp; STROKES" w="105"></section-title>
<div class="fs"><color-field icon="bucket" style="--f:#fff;--b:1px solid #ccc"></color-field><color-field icon="pencil" style="--f:#000"></color-field>
<div class="row"><num-field arrow value="1" unit="PT" style="--w:142px;--pr:7px;--k:21px"><ui-icon slot="icon" name="weight"></ui-icon></num-field><num-field arrow value="Solid" style="--w:142px"><ui-icon slot="icon" name="solid"></ui-icon></num-field></div></div>
<section-title label="OPACITY" w="52"></section-title>
<div class="op"><div class="bar"></div><ui-icon name="thumb" style="margin:6px 0 0 -1.500px"></ui-icon><num-field value="100" unit="%" style="--w:83px;--pl:7px;--k:0px;--pr:11px;margin-left:11px"></num-field></div>
<section-title shut label="DROP SHADOW" w="93"></section-title><section-title shut label="BLUR" w="32"></section-title><div class="end"></div>`);

/* ---------- taskbar ---------- */
define('task-icon', `:host{width:var(--w,61.900px);height:50px;display:flex;align-items:center;justify-content:center;position:relative}
:host([active]){background:#414141}
:host([open])::after{content:"";position:absolute;left:5.500px;right:5.500px;bottom:0;height:3px;background:#76b9ed}
:host([active])::after{left:0;right:0}`, el => `<ui-icon name="${A(el, 'icon')}"></ui-icon>`);
define('task-bar', `:host{height:50px;background:#0c0c0c;display:flex;align-items:center;font:14.500px ${UI};color:#e6e6e6}
.t{display:flex;flex-direction:column;align-items:center;line-height:23px;text-align:center;flex:none}
.e{width:1px;height:50px;background:#555;margin-left:24px}`,
`<task-icon icon="win" style="--w:60px"></task-icon><task-icon icon="tsearch" style="--w:60px"></task-icon><task-icon icon="tview" style="--w:60px"></task-icon>
<task-icon icon="edge" style="margin-left:3.500px"></task-icon><task-icon icon="store"></task-icon><task-icon icon="amazon"></task-icon><task-icon icon="steam"></task-icon><task-icon open icon="explorer"></task-icon><task-icon icon="xampp"></task-icon><task-icon open icon="npp"></task-icon><task-icon open active icon="chrome"></task-icon><task-icon open icon="word"></task-icon><task-icon icon="ps"></task-icon><task-icon open icon="mail"></task-icon><task-icon open icon="skype"></task-icon><task-icon open icon="git"></task-icon>
<ui-icon name="thelp" style="margin-left:451px"></ui-icon><ui-icon name="people" style="margin-left:24px"></ui-icon><ui-icon name="up" style="margin-left:26.500px"></ui-icon><ui-icon name="wifi" style="margin-left:13.500px"></ui-icon><ui-icon name="dropbox" style="margin-left:10.500px"></ui-icon><ui-icon name="battery" style="margin-left:10.500px"></ui-icon><ui-icon name="mute" style="margin-left:9px"></ui-icon><ui-icon name="keyboard" style="margin-left:10.500px"></ui-icon>
<div class="t" style="width:30px;margin-left:11.500px"><fit-text w="29">NLD</fit-text><fit-text w="30">INTL</fit-text></div><div class="t" style="width:62px;margin-left:19px"><fit-text w="35">13:48</fit-text><fit-text w="60">5-2-2019</fit-text></div>
<ui-icon name="notif" style="margin-left:25.500px"></ui-icon><div class="e"></div>`);

define('desktop-screen', `:host{width:1920px;height:1080px;display:flex;flex-direction:column;overflow:hidden}
.b{height:840px;display:flex}`,
`<tab-strip></tab-strip><address-bar></address-bar><bookmark-bar></bookmark-bar><app-header></app-header>
<div class="b"><side-rail></side-rail><stencil-panel></stencil-panel><canvas-area></canvas-area><inspector-panel></inspector-panel></div><task-bar></task-bar>`);

/* Tracks its text so that the run is exactly `w` pixels wide. */
customElements.define('fit-text', class extends HTMLElement {
  connectedCallback() {
    if (!this.shadowRoot) this.attachShadow({ mode: 'open' }).innerHTML = '<style>:host{display:inline-block;white-space:nowrap;flex:none}</style><slot></slot>';
    const n = this.textContent.length, w = this.getBoundingClientRect().width;
    if (n && w) this.style.letterSpacing = ((+this.getAttribute('w') - w) / n).toFixed(3) + 'px';
  }
});
</script>
</body>
</html>
